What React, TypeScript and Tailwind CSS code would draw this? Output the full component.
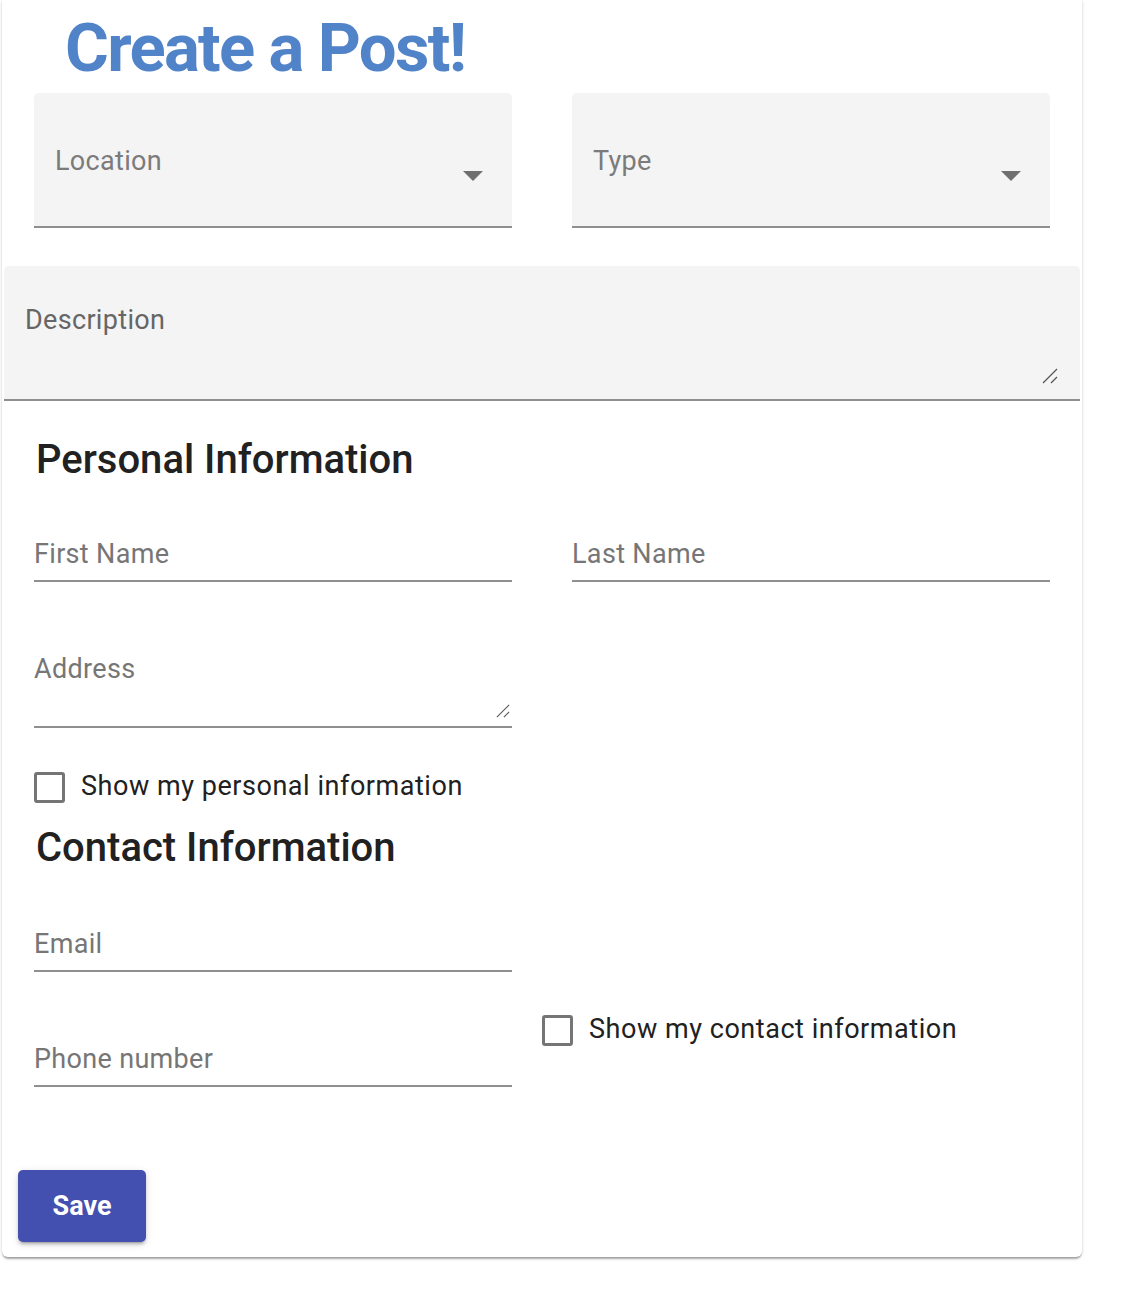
import React from 'react';

const Arrow = () => (
  <svg width="20" height="10" viewBox="0 0 20 10" className="ml-auto mt-[78px] mr-[29px] shrink-0">
    <path d="M0 0 L20 0 L10 10 Z" fill="#6f6f6f" />
  </svg>
);

const Grip: React.FC<{ size: number; className?: string }> = ({ size, className }) => (
  <svg width={size} height={size} viewBox="0 0 16 16" className={className}>
    <line x1="1" y1="15" x2="15" y2="1" stroke="#555" strokeWidth="1.3" />
    <line x1="9" y1="15" x2="15" y2="9" stroke="#555" strokeWidth="1.3" />
  </svg>
);

const SelectBox: React.FC<{ label: string }> = ({ label }) => (
  <div className="flex w-[478px] h-[135px] bg-[#f4f4f4] rounded-t-[5px] border-b-2 border-[#8f8f8f]">
    <div className="pt-[52px] pl-[21px] text-[27px] leading-[32px] tracking-[0.012em] text-[#7b7b7b]">{label}</div>
    <Arrow />
  </div>
);

const LineField: React.FC<{ label: string }> = ({ label }) => (
  <div className="w-[478px] border-b-2 border-[#8f8f8f] pb-[10px]">
    <div className="text-[27px] leading-[32px] tracking-[0.012em] text-[#767676]">{label}</div>
  </div>
);

const Check: React.FC<{ label: string }> = ({ label }) => (
  <div className="flex items-start">
    <div className="mt-[2px] w-[31px] h-[31px] border-[3px] border-[#757575] rounded-[3px] shrink-0" />
    <span className="ml-[16px] text-[27px] leading-[32px] tracking-[0.02em] text-[#212121]">{label}</span>
  </div>
);

export default function App() {
  return (
    <div className="min-h-screen bg-white font-['Roboto',sans-serif]">
      <div className="ml-[2px] w-[1080px] bg-white rounded-b-md shadow-[0_3px_2px_-1px_rgba(0,0,0,0.25),0_1px_2px_0_rgba(0,0,0,0.14),0_1px_4px_0_rgba(0,0,0,0.1)] pb-[15px]">
        <div className="h-[93px] pt-[15px] pl-[63px]">
          <h1 className="text-[67px] leading-none font-bold text-[#5183c9] tracking-[-0.025em]">Create a Post!</h1>
        </div>

        <div className="flex gap-[60px] px-[32px]">
          <SelectBox label="Location" />
          <SelectBox label="Type" />
        </div>

        <div className="mt-[38px] mx-[2px] h-[135px] flex flex-col bg-[#f4f4f4] rounded-t-[5px] border-b-2 border-[#8f8f8f]">
          <div className="pt-[38px] pl-[21px] text-[27px] leading-[32px] tracking-[0.012em] text-[#666]">Description</div>
          <Grip size={16} className="mt-auto self-end mr-[22px] mb-[15px]" />
        </div>

        <h2 className="mt-[35px] pl-[34px] text-[40px] leading-[48px] font-medium text-[#212121]">Personal Information</h2>

        <div className="mt-[54px] flex gap-[60px] px-[32px]">
          <LineField label="First Name" />
          <LineField label="Last Name" />
        </div>

        <div className="mt-[71px] px-[32px]">
          <div className="w-[478px] border-b-2 border-[#8f8f8f]">
            <div className="mt-[1px] text-[27px] leading-[32px] tracking-[0.012em] text-[#767676]">Address</div>
            <div className="h-[41px] flex justify-end items-end pb-[8px] pr-[2px]">
              <Grip size={14} />
            </div>
          </div>
        </div>

        <div className="mt-[42px] px-[32px]">
          <Check label="Show my personal information" />
        </div>

        <h2 className="mt-[21px] pl-[34px] text-[40px] leading-[48px] font-medium text-[#212121]">Contact Information</h2>

        <div className="flex px-[32px]">
          <div className="w-[478px]">
            <div className="mt-[56px]">
              <LineField label="Email" />
            </div>
            <div className="mt-[71px]">
              <LineField label="Phone number" />
            </div>
          </div>
          <div className="ml-[30px] mt-[141px]">
            <Check label="Show my contact information" />
          </div>
        </div>

        <button className="mt-[83px] ml-[16px] w-[128px] h-[72px] rounded-[5px] bg-[#4350af] text-white text-[27px] font-bold shadow-[0_4px_2px_-3px_rgba(0,0,0,0.2),0_3px_3px_0_rgba(0,0,0,0.14),0_2px_8px_0_rgba(0,0,0,0.12)]">
          Save
        </button>
      </div>
    </div>
  );
}
